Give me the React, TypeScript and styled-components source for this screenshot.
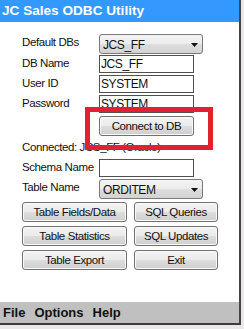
import type { FC, ReactNode } from 'react'
import styled, { createGlobalStyle } from 'styled-components'

const GlobalStyle = createGlobalStyle`
	html, body {
		margin: 0;
		padding: 0;
		background: #ebe8ea;
	}
	* {
		box-sizing: border-box;
	}
`

const uiFont = `'Liberation Sans', Arial, sans-serif`

const Window = styled.div`
	position: relative;
	width: 241px;
	height: 325px;
	display: flex;
	flex-direction: column;
	background: #fff;
	border-right: 2px solid #454545;
	border-bottom: 2px solid #3c3c3c;
	font-family: ${uiFont};
	font-size: 11.5px;
	letter-spacing: -0.4px;
	color: #111;
`

const TitleBar = styled.div`
	height: 22px;
	line-height: 22px;
	padding-left: 2px;
	background: #3399ff;
	color: #fff;
	font-weight: bold;
	font-size: 13.6px;
	letter-spacing: 0;
	white-space: nowrap;
`

const Content = styled.div`
	flex: 1;
	display: flex;
	flex-direction: column;
	padding: 12px 0 0 22px;
`

const Row = styled.div<{ $top?: number }>`
	display: flex;
	align-items: flex-start;
	margin-top: ${p => p.$top ?? 0}px;
`

const Label = styled.div`
	width: 77px;
	line-height: 14px;
	padding-top: 1px;
	white-space: nowrap;
`

const TextBox = styled.input`
	width: 95px;
	height: 18px;
	padding: 0 0 0 1px;
	margin: 0;
	border: 1px solid #505050;
	background: #fff;
	font-family: ${uiFont};
	font-size: 12px;
	letter-spacing: -0.4px;
	color: #111;
	outline: none;
`

const Combo = styled.div`
	width: 104px;
	height: 20px;
	display: flex;
	align-items: center;
	justify-content: space-between;
	padding: 1px 4px 0 3px;
	border: 1px solid #7a7a7a;
	border-radius: 3px;
	background: linear-gradient(#f4f4f4 0%, #ececec 50%, #dedede 51%, #d2d2d2 100%);
	font-size: 12px;
`

const Arrow = styled.svg`
	width: 7px;
	height: 4px;
	flex: none;
`

const PushButton = styled.button<{ $width?: number }>`
	width: ${p => (p.$width ? `${p.$width}px` : '100%')};
	height: 20px;
	margin: 0;
	padding: 0;
	border: 1px solid #707070;
	border-radius: 3px;
	background: linear-gradient(#f3f3f3 0%, #ebebeb 50%, #dddddd 51%, #cfcfcf 100%);
	box-shadow: inset 0 0 0 1px #fbfbfb;
	font-family: ${uiFont};
	font-size: 11.5px;
	letter-spacing: -0.4px;
	color: #111;
	white-space: nowrap;
`

const ConnectRow = styled.div`
	margin: 3px 0 0 77px;
`

const Status = styled.div`
	margin-top: 4px;
	line-height: 14px;
	white-space: nowrap;
`

const ButtonGrid = styled.div`
	display: grid;
	grid-template-columns: 105px 84px;
	column-gap: 7px;
	row-gap: 4px;
	margin-top: 3px;
`

const MenuBar = styled.div`
	height: 21px;
	display: flex;
	align-items: center;
	gap: 9px;
	padding-left: 3px;
	background: #c0c0c0;
	font-weight: bold;
	font-size: 13px;
	letter-spacing: 0;
	color: #111;
`

const Highlight = styled.div`
	position: absolute;
	left: 85px;
	top: 107px;
	width: 128px;
	height: 43px;
	border: 5px solid #e3202e;
	pointer-events: none;
`

const DropDown: FC<{ value: string }> = ({ value }) => (
	<Combo>
		<span>{value}</span>
		<Arrow viewBox="0 0 7 4">
			<path d="M0 0 H7 L3.5 4 Z" fill="#111" />
		</Arrow>
	</Combo>
)

const Field: FC<{ label: string; top?: number; children: ReactNode }> = ({ label, top, children }) => (
	<Row $top={top}>
		<Label>{label}</Label>
		{children}
	</Row>
)

const actions = ['Table Fields/Data', 'SQL Queries', 'Table Statistics', 'SQL Updates', 'Table Export', 'Exit']

export default function App() {
	return (
		<>
			<GlobalStyle />
			<Window>
				<TitleBar>JC Sales ODBC Utility</TitleBar>
				<Content>
					<Field label="Default DBs">
						<DropDown value="JCS_FF" />
					</Field>
					<Field label="DB Name" top={1}>
						<TextBox readOnly defaultValue="JCS_FF" />
					</Field>
					<Field label="User ID" top={2}>
						<TextBox readOnly defaultValue="SYSTEM" />
					</Field>
					<Field label="Password" top={2}>
						<TextBox readOnly defaultValue="SYSTEM" />
					</Field>
					<ConnectRow>
						<PushButton $width={95}>Connect to DB</PushButton>
					</ConnectRow>
					<Status>Connected: JCS_FF (Oracle)</Status>
					<Field label="Schema Name" top={5}>
						<TextBox readOnly defaultValue="" />
					</Field>
					<Field label="Table Name" top={2}>
						<DropDown value="ORDITEM" />
					</Field>
					<ButtonGrid>
						{actions.map(a => (
							<PushButton key={a}>{a}</PushButton>
						))}
					</ButtonGrid>
				</Content>
				<MenuBar>
					<span>File</span>
					<span>Options</span>
					<span>Help</span>
				</MenuBar>
				<Highlight />
			</Window>
		</>
	)
}
